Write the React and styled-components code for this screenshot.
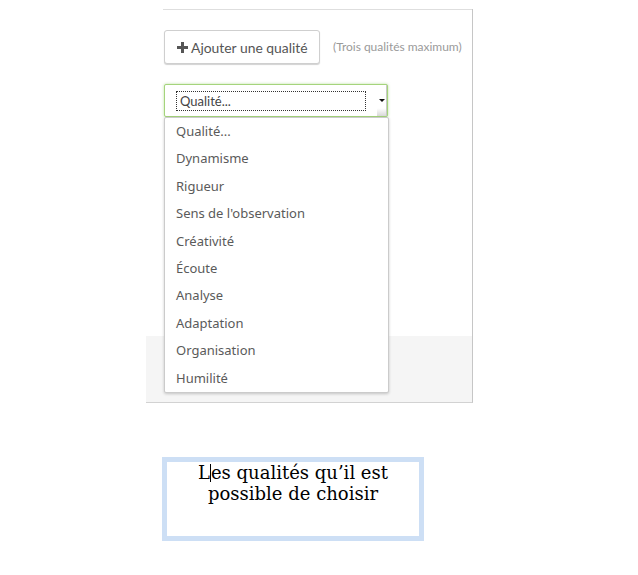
import React from "react";
import styled, { createGlobalStyle } from "styled-components";

const Global = createGlobalStyle`
  body { margin: 0; background: #fff; }
`;

const Page = styled.div`
  padding-top: 9px;
  display: flex;
  flex-direction: column;
  align-items: flex-start;
`;

const Panel = styled.div`
  margin-left: 146px;
  width: 326px;
  height: 393px;
  border-right: 1px solid #c6c6c6;
  border-bottom: 1px solid #d2d2d2;
  display: flex;
  flex-direction: column;
`;

const Body = styled.div`
  position: relative;
  flex: 1;
  margin-left: 17px;
  border-top: 1px solid #dedede;
  padding: 20px 0 0 1px;
  display: flex;
  flex-direction: column;
  align-items: flex-start;
`;

const Footer = styled.div`
  height: 66px;
  background: #f5f5f5;
`;

const Row = styled.div`
  display: flex;
  align-items: center;
  gap: 13px;
`;

const AddButton = styled.button`
  display: flex;
  align-items: center;
  gap: 3px;
  height: 34px;
  width: 156px;
  padding: 0 0 0 12px;
  background: #fff;
  border: 1px solid #cfcfcf;
  border-radius: 3px;
  box-shadow: 0 1px 1px rgba(0, 0, 0, 0.18);
  font-family: Lato, "Liberation Sans", sans-serif;
  font-size: 13.9px;
  color: #555;
`;

const Hint = styled.span`
  font-family: Lato, "Liberation Sans", sans-serif;
  font-size: 12px;
  letter-spacing: -0.02px;
  color: #9a9a9a;
  margin-top: -1px;
`;

const SelectBox = styled.div`
  position: relative;
  margin-top: 20px;
  width: 222px;
  height: 31px;
  border: 1px solid #a5d47c;
  border-radius: 2px;
  box-shadow: 0 0 3px rgba(130, 195, 80, 0.55);
  background: #fff;
  display: flex;
  align-items: center;
`;

const FocusRing = styled.div`
  margin-left: 11px;
  width: 185px;
  height: 18px;
  border: 1px dotted #333;
  display: flex;
  align-items: center;
  padding-left: 3px;
  font-family: Lato, "Liberation Sans", sans-serif;
  font-size: 13px;
  color: #444;
`;

const ArrowZone = styled.div`
  margin-left: auto;
  width: 10px;
  height: 100%;
  display: flex;
  align-items: center;
  justify-content: center;
  background: linear-gradient(to bottom, #fff 75%, #d8d8d8 100%);
  box-shadow: inset -1px 0 0 #c8c8c8;
`;

const Arrow = styled.span`
  width: 0;
  height: 0;
  border-left: 3px solid transparent;
  border-right: 3px solid transparent;
  border-top: 3px solid #111;
`;

const Menu = styled.ul`
  position: absolute;
  top: 107px;
  left: 1px;
  width: 223px;
  margin: 0;
  padding: 0;
  list-style: none;
  background: #fff;
  border: 1px solid #cbcbcb;
  border-radius: 2px;
  box-shadow: 0 1px 3px rgba(0, 0, 0, 0.2);
  z-index: 2;
`;

const Item = styled.li`
  height: 27.4px;
  line-height: 27.4px;
  padding-left: 11px;
  font-family: "Noto Sans", "Open Sans", sans-serif;
  font-size: 13px;
  color: #5a5a5a;
`;

const TextBox = styled.div`
  margin: 54px 0 0 162px;
  width: 252px;
  height: 74px;
  border: 5px solid #cddff5;
  padding-top: 0;
  box-sizing: content-box;
  text-align: center;
  font-family: "DejaVu Serif", serif;
  font-size: 18px;
  line-height: 21px;
  color: #000;
`;

const Caret = styled.span`
  display: inline-block;
  width: 0;
  height: 18px;
  border-left: 1px solid #000;
  vertical-align: -3px;
`;

const qualities = [
  "Qualité...",
  "Dynamisme",
  "Rigueur",
  "Sens de l'observation",
  "Créativité",
  "Écoute",
  "Analyse",
  "Adaptation",
  "Organisation",
  "Humilité",
];

export default function App() {
  return (
    <>
      <Global />
      <Page>
        <Panel>
          <Body>
            <Row>
              <AddButton>
                <svg width="11" height="11" viewBox="0 0 11 11">
                  <path d="M4 0h3v4h4v3H7v4H4V7H0V4h4z" fill="#555" />
                </svg>
                Ajouter une qualité
              </AddButton>
              <Hint>(Trois qualités maximum)</Hint>
            </Row>
            <SelectBox>
              <FocusRing>Qualité...</FocusRing>
              <ArrowZone>
                <Arrow />
              </ArrowZone>
            </SelectBox>
            <Menu>
              {qualities.map((q) => (
                <Item key={q}>{q}</Item>
              ))}
            </Menu>
          </Body>
          <Footer />
        </Panel>
        <TextBox>
          L<Caret />es qualités qu’il est
          <br />
          possible de choisir
        </TextBox>
      </Page>
    </>
  );
}
